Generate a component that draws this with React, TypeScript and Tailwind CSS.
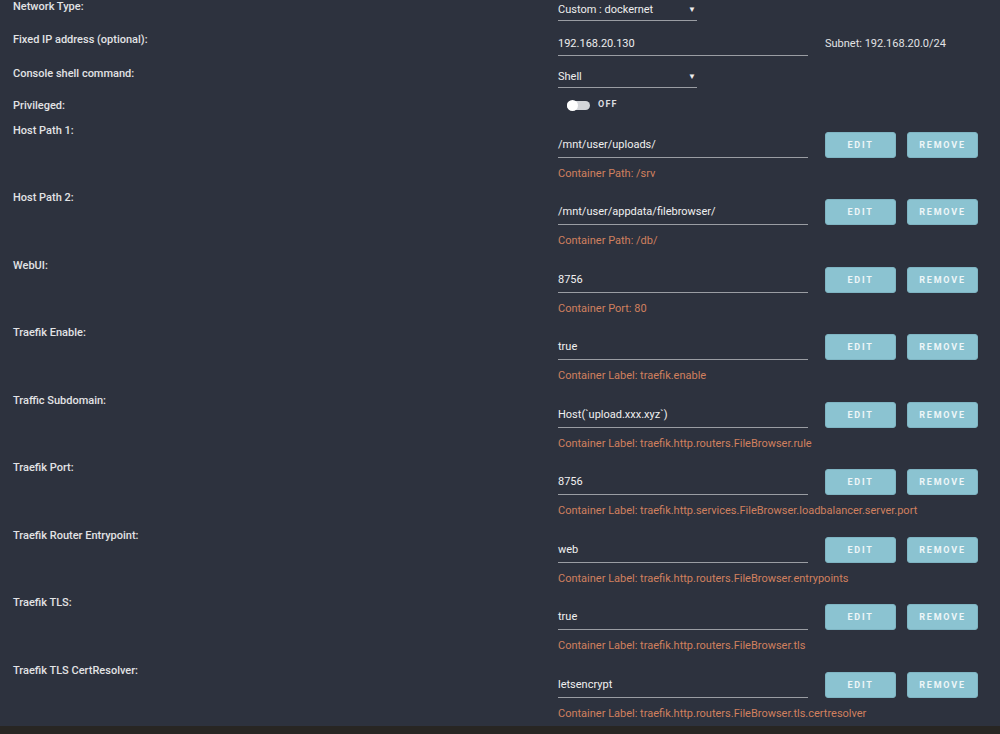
import React from 'react'

const FONT = { fontFamily: 'Roboto, "Liberation Sans", Arial, sans-serif' }

type ConfigRow = { label: string; value: string; sub: string }

const CONFIG_ROWS: ConfigRow[] = [
  { label: 'Host Path 1:', value: '/mnt/user/uploads/', sub: 'Container Path: /srv' },
  { label: 'Host Path 2:', value: '/mnt/user/appdata/filebrowser/', sub: 'Container Path: /db/' },
  { label: 'WebUI:', value: '8756', sub: 'Container Port: 80' },
  { label: 'Traefik Enable:', value: 'true', sub: 'Container Label: traefik.enable' },
  { label: 'Traffic Subdomain:', value: 'Host(`upload.xxx.xyz`)', sub: 'Container Label: traefik.http.routers.FileBrowser.rule' },
  { label: 'Traefik Port:', value: '8756', sub: 'Container Label: traefik.http.services.FileBrowser.loadbalancer.server.port' },
  { label: 'Traefik Router Entrypoint:', value: 'web', sub: 'Container Label: traefik.http.routers.FileBrowser.entrypoints' },
  { label: 'Traefik TLS:', value: 'true', sub: 'Container Label: traefik.http.routers.FileBrowser.tls' },
  { label: 'Traefik TLS CertResolver:', value: 'letsencrypt', sub: 'Container Label: traefik.http.routers.FileBrowser.tls.certresolver' },
]

function Label({ children }: { children: React.ReactNode }) {
  return (
    <div className="w-[558px] shrink-0 pl-[13px] text-[11px] leading-[13px] font-medium text-[#e2e3e5]">
      {children}
    </div>
  )
}

function Select({ value }: { value: string }) {
  return (
    <div className="w-[139px] h-[21px] flex items-end justify-between border-b border-[#9a9da3] pb-[4px] text-[11px] leading-[13px] text-[#eeeeee]">
      <span>{value}</span>
      <span className="text-[8px] leading-[13px] pr-[1px]">▼</span>
    </div>
  )
}

function ActionButton({ children }: { children: React.ReactNode }) {
  return (
    <button className="w-[71px] h-[26px] pt-[2px] rounded-[3px] bg-[#8bc3d1] border border-[#7fb5c3] text-[9px] font-bold tracking-[1.8px] text-[#eef6f8]">
      {children}
    </button>
  )
}

export default function App() {
  return (
    <div className="w-[1000px] h-[734px] overflow-hidden bg-[#2d323e] flex flex-col" style={FONT}>
      <div className="flex-1 min-h-0 overflow-hidden">
        {/* Network Type */}
        <div className="flex h-[33px]">
          <Label>Network Type:</Label>
          <div>
            <Select value="Custom : dockernet" />
          </div>
        </div>

        {/* Fixed IP */}
        <div className="flex h-[34px]">
          <Label>Fixed IP address (optional):</Label>
          <div className="flex items-start">
            <div className="w-[250px] h-[23px] flex items-end border-b border-[#9a9da3] pb-[5px] text-[11px] leading-[13px] text-[#eeeeee]">
              192.168.20.130
            </div>
            <div className="ml-[17px] pt-[4px] text-[11px] leading-[13px] text-[#e2e3e5]">Subnet: 192.168.20.0/24</div>
          </div>
        </div>

        {/* Console shell */}
        <div className="flex h-[32px]">
          <Label>Console shell command:</Label>
          <div>
            <Select value="Shell" />
          </div>
        </div>

        {/* Privileged */}
        <div className="flex h-[25px]">
          <Label>Privileged:</Label>
          <div className="flex items-center gap-[8px] pl-[9px] h-[12px]">
            <div className="w-[23px] h-[9px] rounded-full bg-[#d4d6da] relative">
              <div className="absolute left-0 top-[-1px] w-[11px] h-[11px] rounded-full bg-white" />
            </div>
            <span className="text-[9px] font-bold tracking-[1.2px] text-[#dcdde0]">OFF</span>
          </div>
        </div>

        {CONFIG_ROWS.map((row, i) => (
          <div key={row.label} className={`flex ${i % 2 === 0 ? 'h-[67px]' : 'h-[68px]'}`}>
            <Label>{row.label}</Label>
            <div className="flex flex-col">
              <div className="flex items-start">
                <div className="w-[250px] h-[34px] flex items-end border-b border-[#9a9da3] pb-[6px] text-[11px] leading-[13px] text-[#f0f0f0]">
                  {row.value}
                </div>
                <div className="ml-[17px] mt-[8px] flex gap-[11px]">
                  <ActionButton>EDIT</ActionButton>
                  <ActionButton>REMOVE</ActionButton>
                </div>
              </div>
              <div className="mt-[9px] text-[11px] leading-[13px] text-[#d0805f]">{row.sub}</div>
            </div>
          </div>
        ))}
      </div>
      <div className="h-[8px] shrink-0 bg-[#282623]" />
    </div>
  )
}
